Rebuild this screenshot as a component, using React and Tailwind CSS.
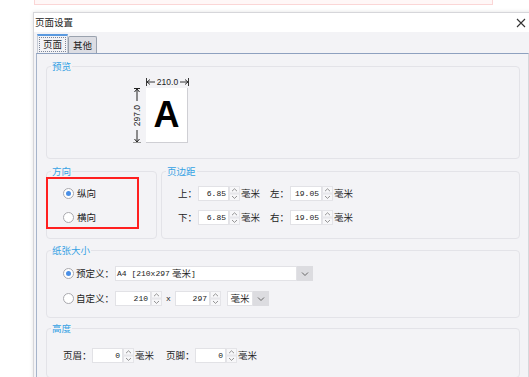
import React from "react";

const cjk = "font-['Noto_Sans_CJK_SC',sans-serif]";
const mono = "font-['Liberation_Mono','Noto_Sans_CJK_SC',monospace]";

function Spinner() {
  return (
    <svg width="11" height="15" viewBox="0 0 11 15" className="shrink-0">
      <rect x="0.5" y="0.5" width="10" height="6.5" fill="#f7f7f9" stroke="#e4e4e8" />
      <rect x="0.5" y="8" width="10" height="6.5" fill="#f7f7f9" stroke="#e4e4e8" />
      <path d="M3 5.2 L5.5 2.8 L8 5.2" fill="none" stroke="#7a7a7a" strokeWidth="0.8" />
      <path d="M3 10 L5.5 12.4 L8 10" fill="none" stroke="#7a7a7a" strokeWidth="0.8" />
    </svg>
  );
}

function Spin({ value, boxW = "w-[32px]" }) {
  return (
    <div className="flex h-[15px] shrink-0">
      <div className={`${boxW} h-full bg-white border border-[#e2e2e6] flex items-center justify-end pr-[2px] ${mono} text-[8px] text-[#222]`}>
        {value}
      </div>
      <Spinner />
    </div>
  );
}

function Chevron() {
  return (
    <svg width="8" height="6" viewBox="0 0 8 6">
      <path d="M1 1.5 L4 4.5 L7 1.5" fill="none" stroke="#666" strokeWidth="1" />
    </svg>
  );
}

function Radio({ checked }) {
  return (
    <span className="w-[11px] h-[11px] rounded-full border border-[#a9a9ae] bg-white flex items-center justify-center shrink-0">
      {checked && <span className="w-[5px] h-[5px] rounded-full bg-[#4a8fe6]" />}
    </span>
  );
}

function Group({ title, className = "", children }) {
  return (
    <fieldset className={`border border-[#e3e3e8] rounded-[4px] min-w-0 ${className}`}>
      <legend className="ml-[4px] px-[1px] leading-[12px] text-[#35a2e4]">{title}</legend>
      {children}
    </fieldset>
  );
}

export default function App() {
  return (
    <div className={`w-[529px] h-[377px] overflow-hidden bg-white text-[9.5px] text-[#333] ${cjk}`}>
      <div className="h-[5px] ml-[34px] w-[459px] border-x border-b border-[#fbd6d6] bg-[#fff7f7]" />

      <div className="mt-[7px] ml-[33px] w-[500px] border-l border-t border-[#d6d6da] shadow-[0_0_4px_rgba(0,0,0,0.12)]">
        {/* title bar */}
        <div className="h-[19px] bg-white flex items-center justify-between pl-[1px] pr-[7px]">
          <span className="text-[#222]">页面设置</span>
          <svg width="10" height="10" viewBox="0 0 10 10">
            <path d="M1 1 L9 9 M9 1 L1 9" stroke="#333" strokeWidth="1.1" />
          </svg>
        </div>

        <div className="bg-[#f3f3f6] pt-[2px] pl-[2px]">
          {/* tabs */}
          <div className="flex items-end h-[19px] ml-[1px]">
            <div className="h-[19px] w-[31px] border-t-2 border-t-[#5a9ae0] border-x border-x-[#c6ccd6] bg-[#f3f3f6] flex items-center justify-center">
              <span className="border border-dotted border-[#7d8799] px-[3px] leading-[13px] text-[#222]">页面</span>
            </div>
            <div className="h-[17px] w-[29px] border border-b-0 border-[#9aa2ae] rounded-t-[2px] bg-[#dcdde3] flex items-center justify-center text-[#222]">
              其他
            </div>
          </div>

          {/* panel */}
          <div className="w-[493px] border-t border-l border-r border-t-[#8ea1bf] border-l-[#a6b4ca] border-r-[#d6d6da] pl-[9px] pr-[8px] pb-[20px]">
            <Group title="预览" className="mt-[6px] pt-[5px] pb-[15px]">
              <div className="flex items-end ml-[85px]">
                <div className="h-[55px] w-[10px] mr-[4px] flex flex-col items-center justify-between">
                  <svg width="8" height="13" viewBox="0 0 8 13">
                    <path d="M1 0.5 H7 M4 1 V13 M1.5 4 L4 1 L6.5 4" fill="none" stroke="#222" strokeWidth="1" />
                  </svg>
                  <span className="[writing-mode:vertical-rl] rotate-180 font-['Liberation_Sans',sans-serif] text-[8.5px] leading-[10px] text-[#222]">297.0</span>
                  <svg width="8" height="13" viewBox="0 0 8 13">
                    <path d="M4 0 V12 M1.5 9 L4 12 L6.5 9" fill="none" stroke="#222" strokeWidth="1" />
                    <path d="M0 12.5 H8" stroke="#999" strokeWidth="1" />
                  </svg>
                </div>
                <div className="flex flex-col">
                  <div className="w-[43px] h-[10px] flex items-center justify-between font-['Liberation_Sans',sans-serif] text-[8.5px] text-[#222] mb-[1px]">
                    <svg width="9" height="8" viewBox="0 0 9 8">
                      <path d="M0.5 0 V8 M1 4 H9 M4 1.5 L1 4 L4 6.5" fill="none" stroke="#222" strokeWidth="0.9" />
                    </svg>
                    <span className="leading-[10px]">210.0</span>
                    <svg width="9" height="8" viewBox="0 0 9 8">
                      <path d="M8.5 0 V8 M0 4 H8 M5 1.5 L8 4 L5 6.5" fill="none" stroke="#222" strokeWidth="0.9" />
                    </svg>
                  </div>
                  <div className="w-[42px] h-[55px] bg-white border-r border-b border-[#cfcfd4] flex items-center justify-center">
                    <span className="font-['Liberation_Sans',sans-serif] font-bold text-[36px] leading-none text-black">A</span>
                  </div>
                </div>
              </div>
            </Group>

            <div className="flex gap-[4px] mt-[6px]">
              <Group title="方向" className="w-[111px] pb-[9px]">
                <div className="w-[93px] h-[52px] -ml-px border-2 border-[#ff1f1f] pt-[6px] pl-[15px] flex flex-col gap-[8px]">
                  <div className="h-[16px] flex items-center gap-[3px]">
                    <Radio checked />
                    <span className="text-[#222]">纵向</span>
                  </div>
                  <div className="h-[16px] flex items-center gap-[3px]">
                    <Radio />
                    <span className="text-[#222]">横向</span>
                  </div>
                </div>
              </Group>

              <Group title="页边距" className="flex-1 pt-[9px] pb-[13px]">
                <div className="flex flex-col gap-[9px] pl-[16px]">
                  {[
                    ["上：", "6.85", "左：", "19.05"],
                    ["下：", "6.85", "右：", "19.05"],
                  ].map(([a, av, b, bv]) => (
                    <div key={a} className="h-[15px] flex items-center">
                      <span className="w-[20px] text-[#222]">{a}</span>
                      <Spin value={av} boxW="w-[31px]" />
                      <span className="ml-[1px] text-[#222]">毫米</span>
                      <span className="ml-[10px] w-[20px] text-[#222]">{b}</span>
                      <Spin value={bv} boxW="w-[32px]" />
                      <span className="ml-[1px] text-[#222]">毫米</span>
                    </div>
                  ))}
                </div>
              </Group>
            </div>

            <Group title="纸张大小" className="mt-[5px] pt-[10px] pb-[11px]">
              <div className="flex flex-col gap-[10px] pl-[16px]">
                <div className="h-[15px] flex items-center">
                  <Radio checked />
                  <span className="ml-[2px] w-[39px] text-[#222]">预定义：</span>
                  <div className="flex h-[15px]">
                    <div className={`w-[182px] bg-white border border-[#e2e2e6] flex items-center pl-[1px] ${mono} text-[8px] text-[#222]`}>
                      A4 [210x297 <span className={`${cjk} text-[9.5px]`}>&nbsp;毫米</span>]
                    </div>
                    <div className="w-[16px] bg-[#dcdce0] flex items-center justify-center">
                      <Chevron />
                    </div>
                  </div>
                </div>
                <div className="h-[15px] flex items-center">
                  <Radio />
                  <span className="ml-[2px] w-[39px] text-[#222]">自定义：</span>
                  <Spin value="210" boxW="w-[36px]" />
                  <span className={`w-[13px] text-center ${mono} text-[8px] text-[#222]`}>x</span>
                  <Spin value="297" boxW="w-[35px]" />
                  <div className="ml-[6px] flex h-[15px]">
                    <div className="w-[26px] bg-white border border-[#e2e2e6] flex items-center justify-center text-[#222]">毫米</div>
                    <div className="w-[16px] bg-[#dcdce0] flex items-center justify-center">
                      <Chevron />
                    </div>
                  </div>
                </div>
              </div>
            </Group>

            <Group title="高度" className="mt-[4px] pt-[14px] pb-[14px]">
              <div className="h-[15px] flex items-center pl-[16px]">
                <span className="w-[29px] text-[#222]">页眉：</span>
                <Spin value="0" boxW="w-[31px]" />
                <span className="ml-[1px] text-[#222]">毫米</span>
                <span className="ml-[12px] w-[29px] text-[#222]">页脚：</span>
                <Spin value="0" boxW="w-[31px]" />
                <span className="ml-[1px] text-[#222]">毫米</span>
              </div>
            </Group>
          </div>
        </div>
      </div>
    </div>
  );
}
